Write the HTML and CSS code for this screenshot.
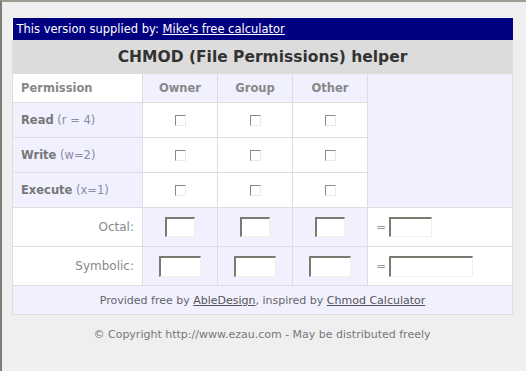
FILE: index.html
```html
<!DOCTYPE html>
<html lang="en">
<head>
  <meta charset="UTF-8">
  <title>CHMOD (File Permissions) helper</title>
  <link rel="stylesheet" href="styles.css">
</head>
<body>
  <div class="frame">
    <table class="chmod">
      <colgroup>
        <col class="c-perm">
        <col class="c-who">
        <col class="c-who">
        <col class="c-who">
        <col class="c-total">
      </colgroup>
      <tr>
        <td colspan="5" class="supplier">This version supplied by: <a href="#">Mike's free calculator</a></td>
      </tr>
      <tr>
        <th colspan="5" class="title">CHMOD (File Permissions) helper</th>
      </tr>
      <tr class="head">
        <th class="perm">Permission</th>
        <th>Owner</th>
        <th>Group</th>
        <th>Other</th>
        <td rowspan="4" class="blank"></td>
      </tr>
      <tr class="check">
        <td class="label"><b>Read</b> <span>(r = 4)</span></td>
        <td><input type="checkbox" id="ur"></td>
        <td><input type="checkbox" id="gr"></td>
        <td><input type="checkbox" id="or"></td>
      </tr>
      <tr class="check">
        <td class="label"><b>Write</b> <span>(w=2)</span></td>
        <td><input type="checkbox" id="uw"></td>
        <td><input type="checkbox" id="gw"></td>
        <td><input type="checkbox" id="ow"></td>
      </tr>
      <tr class="check">
        <td class="label"><b>Execute</b> <span>(x=1)</span></td>
        <td><input type="checkbox" id="ux"></td>
        <td><input type="checkbox" id="gx"></td>
        <td><input type="checkbox" id="ox"></td>
      </tr>
      <tr class="value">
        <td class="name">Octal:</td>
        <td class="field"><input type="text" class="oct" id="u-oct"></td>
        <td class="field"><input type="text" class="oct" id="g-oct"></td>
        <td class="field"><input type="text" class="oct" id="o-oct"></td>
        <td class="total">= <input type="text" class="oct-all" id="all-oct"></td>
      </tr>
      <tr class="value">
        <td class="name">Symbolic:</td>
        <td class="field"><input type="text" class="sym" id="u-sym"></td>
        <td class="field"><input type="text" class="sym" id="g-sym"></td>
        <td class="field"><input type="text" class="sym" id="o-sym"></td>
        <td class="total">= <input type="text" class="sym-all" id="all-sym"></td>
      </tr>
      <tr>
        <td colspan="5" class="credits">Provided free by <a href="#">AbleDesign</a>, inspired by <a href="#">Chmod Calculator</a></td>
      </tr>
    </table>
    <p class="copyright">&copy; Copyright http://www.ezau.com - May be distributed freely</p>
  </div>
</body>
</html>
```

FILE: styles.css
```css
html, body {
  margin: 0;
  height: 100%;
}
body {
  background-color: #efefef;
  font-family: "DejaVu Sans", Verdana, sans-serif;
  font-size: 11px;
  color: #777;
}
.frame {
  box-sizing: border-box;
  min-height: 100%;
  border-top: 2px solid #9d9c94;
  border-left: 2px solid #7f7e76;
  padding: 16px 0 0 10px;
}
.chmod {
  width: 500px;
  table-layout: fixed;
  border-collapse: collapse;
  background-color: #fff;
}
.c-perm { width: 130px; }
.c-who { width: 75px; }
.c-total { width: 145px; }
.chmod td, .chmod th {
  border: 1px solid #dedede;
  padding: 0;
}
.supplier {
  background-color: #000080;
  color: #fff;
  height: 22px;
  padding: 0 4px !important;
  border: none !important;
  font-size: 11.5px;
}
.supplier a {
  color: #fff;
}
.title {
  background-color: #dcdcdc;
  color: #333;
  font-size: 15.5px;
  height: 33px;
  border-top: none !important;
}
.head th {
  height: 28px;
  background-color: #f0f0ff;
  color: #888;
  font-weight: bold;
  font-size: 11.5px;
}
.head .perm {
  background-color: #fff;
  text-align: left;
  padding-left: 8px;
}
.blank {
  background-color: #f0f0ff;
}
.check td {
  height: 34px;
  text-align: center;
}
.check .label {
  background-color: #f0f0ff;
  text-align: left;
  padding-left: 8px;
  font-size: 11.5px;
}
.label b {
  color: #777;
}
.label span {
  color: #8c8ca0;
}
input[type="checkbox"] {
  appearance: none;
  box-sizing: border-box;
  width: 11px;
  height: 11px;
  margin: 0;
  vertical-align: middle;
  background-color: #fff;
  border: 1px solid #ebebe0;
  border-top-color: #8a8a80;
  border-left-color: #8a8a80;
}
.value td {
  height: 38px;
}
.value .name {
  text-align: right;
  padding-right: 8px;
  color: #888;
  font-size: 12px;
}
.value .field {
  background-color: #f0f0ff;
  text-align: center;
}
.value .total {
  padding-left: 8px;
  color: #999;
  font-size: 12px;
  word-spacing: -1px;
}
input[type="text"] {
  box-sizing: border-box;
  height: 20px;
  margin: 0;
  padding: 0 2px;
  vertical-align: middle;
  background-color: #fff;
  border: 1px solid #f0f0e4;
  border-top: 2px solid #7a7a70;
  border-left: 2px solid #7a7a70;
  font-family: inherit;
  font-size: 11px;
  outline: none;
}
.oct { width: 30px; }
.sym { width: 42px; height: 21px !important; }
.oct-all { width: 43px; }
.sym-all { width: 84px; height: 21px !important; }
.credits {
  background-color: #f0f0ff;
  height: 28px;
  text-align: center;
  color: #666;
}
.credits a {
  color: #555;
}
.copyright {
  width: 500px;
  margin: 13px 0 0;
  text-align: center;
  color: #777;
}
```
